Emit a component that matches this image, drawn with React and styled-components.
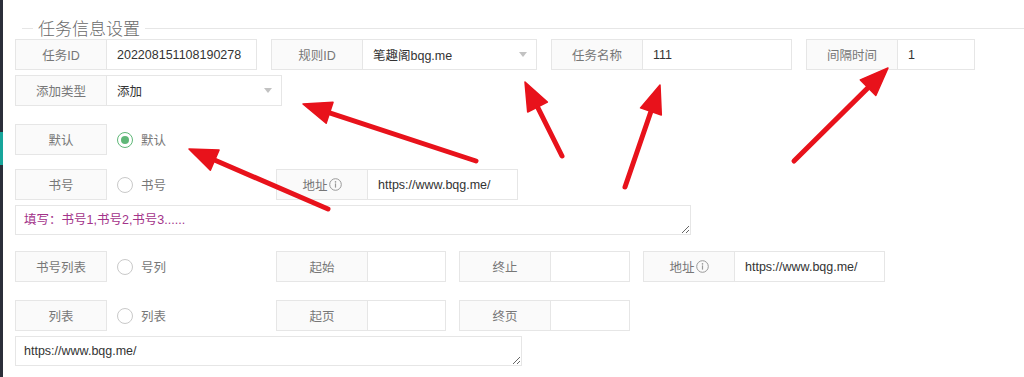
import React from "react";
import styled, { createGlobalStyle } from "styled-components";

const FONT = `"Liberation Sans", "Noto Sans CJK SC", sans-serif`;

const Global = createGlobalStyle`
  html, body { margin: 0; padding: 0; background: #fff; }
  body { font-family: ${FONT}; }
  * { box-sizing: border-box; }
`;

const Page = styled.div`
  position: relative;
  display: flex;
  width: 1024px;
  height: 377px;
  overflow: hidden;
  background: #fff;
`;

const Sidebar = styled.div`
  width: 3px;
  flex: none;
  background: #2b2f3a;
  display: flex;
  flex-direction: column;
`;

const SideMark = styled.div`
  margin-top: 132px;
  height: 33px;
  background: #17a59b;
`;

const Main = styled.div`
  flex: 1;
  padding: 18px 0 0 12px;
  font-size: 13px;
`;

const Title = styled.div`
  display: flex;
  align-items: center;
  height: 20px;
  margin-left: 7px;
  color: #6a6a6a;
  font-family: "Noto Sans CJK SC", sans-serif;
  font-size: 17px;
  font-weight: 300;
  line-height: 20px;
  &::before {
    content: "";
    width: 11px;
    border-top: 1px solid #e6e6e6;
  }
  &::after {
    content: "";
    flex: 1;
    border-top: 1px solid #e6e6e6;
  }
  span {
    padding: 0 5px;
  }
`;

const Row = styled.div`
  display: flex;
  height: 31px;
  margin-top: ${(p) => p.$top}px;
  gap: ${(p) => p.$gap || 0}px;
`;

const Group = styled.div`
  display: flex;
  height: 100%;
`;

const Label = styled.div`
  width: 92px;
  height: 100%;
  display: flex;
  align-items: center;
  justify-content: center;
  background: #fafafa;
  border: 1px solid #e6e6e6;
  color: #777;
  font-size: 12.5px;
`;

const Field = styled.input`
  width: ${(p) => p.$w}px;
  height: 100%;
  border: 1px solid #e6e6e6;
  border-left: none;
  background: #fff;
  padding: 0 0 0 10px;
  color: #333;
  font-family: ${FONT};
  font-size: 12.5px;
  outline: none;
`;

const Select = styled.div`
  width: ${(p) => p.$w}px;
  height: 100%;
  display: flex;
  align-items: center;
  justify-content: space-between;
  border: 1px solid #e6e6e6;
  border-left: none;
  padding: 0 9px 0 10px;
  color: #333;
  font-size: 12.5px;
  &::after {
    content: "";
    border-style: solid;
    border-width: 5px 4px 0 4px;
    border-color: #c2c2c2 transparent transparent transparent;
  }
`;

const RadioCell = styled.div`
  width: 156px;
  height: 100%;
  display: flex;
  align-items: center;
  padding-left: 10px;
  gap: 8px;
  color: #777;
  font-size: 12.5px;
`;

const RadioRing = styled.span`
  width: 16px;
  height: 16px;
  border-radius: 50%;
  border: 1.5px solid ${(p) => (p.$on ? "#5fb878" : "#c9c9c9")};
  display: flex;
  align-items: center;
  justify-content: center;
  &::after {
    content: "";
    width: 8px;
    height: 8px;
    border-radius: 50%;
    background: ${(p) => (p.$on ? "#5fb878" : "transparent")};
  }
`;

const Area = styled.textarea`
  display: block;
  width: ${(p) => p.$w}px;
  height: 30px;
  margin-top: 5px;
  border: 1px solid #e6e6e6;
  padding: 6px 8px 0 8px;
  color: ${(p) => p.$color || "#333"};
  font-family: ${FONT};
  font-size: 12.5px;
  line-height: 16px;
  outline: none;
  overflow: hidden;
`;

const Overlay = styled.svg`
  position: absolute;
  left: 0;
  top: 0;
  pointer-events: none;
`;

const InfoIcon = () => (
  <svg width="13" height="13" viewBox="0 0 13 13" style={{ marginLeft: 1 }}>
    <circle cx="6.5" cy="6.5" r="5.8" fill="none" stroke="#999" strokeWidth="1" />
    <circle cx="6.5" cy="3.9" r="0.8" fill="#999" />
    <rect x="5.9" y="5.4" width="1.2" height="4.2" fill="#999" />
  </svg>
);

const Radio = ({ on, children }) => (
  <RadioCell>
    <RadioRing $on={on} />
    {children}
  </RadioCell>
);

const Arrow = ({ x1, y1, x2, y2 }) => {
  const dx = x2 - x1;
  const dy = y2 - y1;
  const len = Math.hypot(dx, dy);
  const ux = dx / len;
  const uy = dy / len;
  const L = 28;
  const W = 11;
  const bx = x2 - ux * L;
  const by = y2 - uy * L;
  const px = -uy;
  const py = ux;
  const pts = `${x2},${y2} ${bx + px * W},${by + py * W} ${bx - px * W},${by - py * W}`;
  return (
    <g>
      <line x1={x1} y1={y1} x2={bx + ux * 4} y2={by + uy * 4} stroke="#e8121b" strokeWidth="5" strokeLinecap="round" />
      <polygon points={pts} fill="#e8121b" stroke="#e8121b" strokeWidth="1.5" strokeLinejoin="round" />
    </g>
  );
};

const arrows = [
  { x1: 476, y1: 161, x2: 303, y2: 104 },
  { x1: 562, y1: 156, x2: 525, y2: 82 },
  { x1: 625, y1: 187, x2: 660, y2: 85 },
  { x1: 794, y1: 161, x2: 888, y2: 68 },
  { x1: 328, y1: 209, x2: 189, y2: 149 },
];

export default function App() {
  return (
    <>
      <Global />
      <Page>
        <Sidebar>
          <SideMark />
        </Sidebar>
        <Main>
          <Title>
            <span>任务信息设置</span>
          </Title>
          <Row $top={1} $gap={14}>
            <Group>
              <Label>任务ID</Label>
              <Field $w={150} readOnly value="202208151108190278" />
            </Group>
            <Group>
              <Label>规则ID</Label>
              <Select $w={174}>笔趣阁bqg.me</Select>
            </Group>
            <Group>
              <Label>任务名称</Label>
              <Field $w={149} readOnly value="111" />
            </Group>
            <Group>
              <Label>间隔时间</Label>
              <Field $w={77} readOnly value="1" />
            </Group>
          </Row>
          <Row $top={5}>
            <Group>
              <Label>添加类型</Label>
              <Select $w={175}>添加</Select>
            </Group>
          </Row>
          <Row $top={18}>
            <Group>
              <Label>默认</Label>
              <Radio on>默认</Radio>
            </Group>
          </Row>
          <Row $top={14} $gap={13}>
            <Group>
              <Label>书号</Label>
              <Radio>书号</Radio>
            </Group>
            <Group>
              <Label>
                地址
                <InfoIcon />
              </Label>
              <Field $w={150} readOnly value="https://www.bqg.me/" />
            </Group>
          </Row>
          <Area $w={676} $color="#a3338a" readOnly value="填写：书号1,书号2,书号3......" />
          <Row $top={16} $gap={13}>
            <Group>
              <Label>书号列表</Label>
              <Radio>号列</Radio>
            </Group>
            <Group>
              <Label>起始</Label>
              <Field $w={78} readOnly value="" />
            </Group>
            <Group>
              <Label>终止</Label>
              <Field $w={79} readOnly value="" />
            </Group>
            <Group>
              <Label>
                地址
                <InfoIcon />
              </Label>
              <Field $w={150} readOnly value="https://www.bqg.me/" />
            </Group>
          </Row>
          <Row $top={18} $gap={13}>
            <Group>
              <Label>列表</Label>
              <Radio>列表</Radio>
            </Group>
            <Group>
              <Label>起页</Label>
              <Field $w={78} readOnly value="" />
            </Group>
            <Group>
              <Label>终页</Label>
              <Field $w={79} readOnly value="" />
            </Group>
          </Row>
          <Area $w={507} readOnly value="https://www.bqg.me/" />
        </Main>
        <Overlay width="1024" height="377" viewBox="0 0 1024 377">
          {arrows.map((a, i) => (
            <Arrow key={i} {...a} />
          ))}
        </Overlay>
      </Page>
    </>
  );
}
